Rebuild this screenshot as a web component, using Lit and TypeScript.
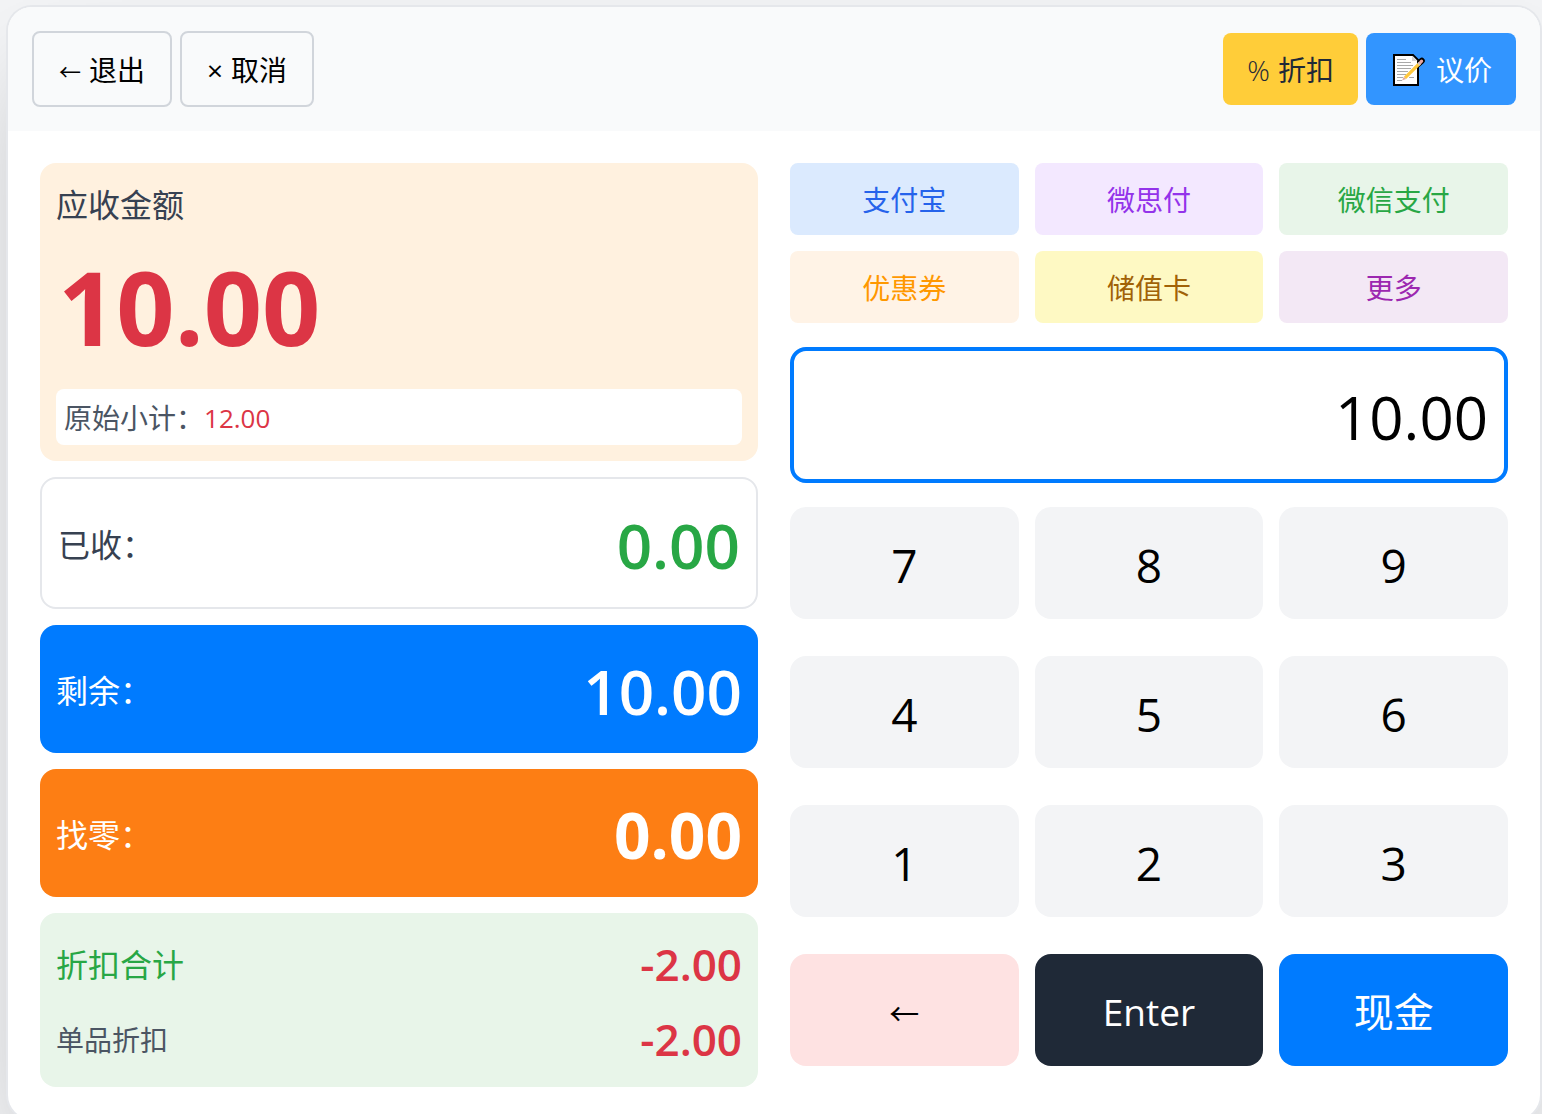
import { LitElement, html, css } from "lit";
import { customElement, state } from "lit/decorators.js";
import { classMap } from "lit/directives/class-map.js";

interface Method {
  label: string;
  tone: string;
}

const METHODS: Method[] = [
  { label: "支付宝", tone: "blue" },
  { label: "微思付", tone: "violet" },
  { label: "微信支付", tone: "green" },
  { label: "优惠券", tone: "orange" },
  { label: "储值卡", tone: "yellow" },
  { label: "更多", tone: "purple" },
];

const DIGITS = ["7", "8", "9", "4", "5", "6", "1", "2", "3"];

const memoIcon = html`
  <svg class="memo" viewBox="-3 0 37 34" fill="none" aria-hidden="true">
    <path d="M1 2H20L25 7V32H1Z" fill="#fff" stroke="#000" stroke-width="2" />
    <path d="M23.500 12.500L28.800 7.700" stroke="#000" stroke-width="6" stroke-linecap="round" />
    <path d="M2 3H19.500L24 7.500V31H2Z" fill="#fff" />
    <path d="M19 3V8H24L19.500 3Z" fill="#d6d6d6" />
    <path
      d="M4 6.500H13M4 9.500H18M4 12.500H20M4 15.500H18M4 18.500H15M4 21.500H13M4 24.500H10M16 24.500H21M4 27.500H9"
      stroke="#a9a9a9"
      stroke-width="1"
    />
    <path d="M12 24.800L26.500 10.500" stroke="#ffc83d" stroke-width="3.200" />
    <path d="M9 27.500L10.900 23.700L13.100 25.900Z" fill="#e0aca0" />
    <path d="M25.500 11.500L27 10" stroke="#c8c8c8" stroke-width="3.200" />
    <path d="M27.500 9.300L28.600 8.200" stroke="#e9a6a1" stroke-width="3.200" stroke-linecap="round" />
  </svg>
`;

@customElement("app-root")
export class AppRoot extends LitElement {
  static styles = css`
    :host {
      display: block;
      height: 100vh;
      overflow: hidden;
      box-sizing: border-box;
      padding: 7px 2px 0 8px;
      background: #f3f4f6;
      color: #000;
      font-family: "Open Sans", "Noto Sans CJK SC", sans-serif;
      font-size: 28px;
      line-height: 40px;
    }
    *,
    *::before,
    *::after {
      box-sizing: border-box;
    }
    button,
    input {
      margin: 0;
      font: inherit;
      color: inherit;
    }
    button {
      display: flex;
      align-items: center;
      justify-content: center;
      padding: 2px 24px 0;
      border: 0;
      cursor: pointer;
      white-space: nowrap;
    }
    .card {
      border-radius: 24px;
      background: #fff;
      overflow: hidden;
      box-shadow:
        0 0 0 2px #e5e7eb,
        0 50px 100px -24px rgba(0, 0, 0, 0.25);
    }
    .bar {
      display: flex;
      align-items: center;
      justify-content: space-between;
      padding: 24px;
      background: #f9fafb;
    }
    .group {
      display: flex;
      gap: 8px;
    }
    .tool {
      height: 72px;
      gap: 8px;
      border-radius: 8px;
    }
    .outlined {
      height: 76px;
      padding: 2px 25px 0;
      border: 2px solid #d1d5db;
      background: transparent;
    }
    .discount {
      background: #ffcd39;
      color: #1f2937;
    }
    .percent {
      font-weight: 300;
    }
    .bargain {
      background: #3295ff;
      color: #fff;
      gap: 9px;
    }
    .memo {
      width: 37px;
      height: 34px;
    }
    .body {
      display: grid;
      grid-template-columns: 1fr 1fr;
      gap: 32px;
      padding: 32px;
    }
    .summary {
      display: flex;
      flex-direction: column;
      gap: 16px;
    }
    .panel {
      border-radius: 16px;
      padding: 18px 16px 14px;
      font-size: 32px;
      line-height: 48px;
    }
    .due {
      padding-bottom: 16px;
      background: #fff1df;
      color: #374151;
    }
    .due-value {
      padding: 8px 2px 0;
      margin-bottom: 12px;
      color: #dc3545;
      font-size: 102px;
      line-height: 140px;
      font-weight: 700;
    }
    .original {
      display: flex;
      padding: 9px 8px 7px;
      border-radius: 8px;
      background: #fff;
      color: #4b5563;
      font-size: 28px;
      line-height: 40px;
    }
    .original-value {
      color: #dc3545;
      font-size: 26px;
    }
    .line {
      display: flex;
      align-items: center;
      justify-content: space-between;
    }
    .value {
      font-size: 62px;
      line-height: 96px;
      font-weight: 600;
    }
    .received {
      border: 2px solid #e5e7eb;
      color: #374151;
    }
    .received .value {
      color: #28a745;
    }
    .remaining {
      background: #007bff;
      color: #fff;
    }
    .change {
      background: #fd7e14;
      color: #fff;
    }
    .change .value {
      font-size: 64px;
      font-weight: 700;
    }
    .discounts {
      display: flex;
      flex-direction: column;
      gap: 8px;
      background: #e8f5e9;
      color: #28a745;
    }
    .detail {
      color: #4b5563;
      font-size: 28px;
    }
    .minus {
      color: #dc3545;
      font-size: 44px;
      line-height: 67px;
      font-weight: 600;
    }
    .entry {
      display: flex;
      flex-direction: column;
      gap: 24px;
    }
    .methods,
    .keys {
      display: grid;
      grid-template-columns: repeat(3, 1fr);
      gap: 16px;
    }
    .method {
      height: 72px;
      border-radius: 8px;
    }
    .blue {
      background: #dbeafe;
      color: #2563eb;
    }
    .violet {
      background: #f3e8ff;
      color: #9333ea;
    }
    .green {
      background: #e8f5e9;
      color: #28a745;
    }
    .orange {
      background: #fff3e6;
      color: #ff9800;
    }
    .yellow {
      background: #fef9c3;
      color: #a16207;
    }
    .purple {
      background: #f3e8f5;
      color: #9c27b0;
    }
    .amount {
      width: 100%;
      height: 136px;
      padding: 4px 16px 0;
      border: 4px solid #007bff;
      border-radius: 16px;
      outline: 0;
      background: #fff;
      color: #000;
      font-size: 60px;
      text-align: right;
    }
    .keys {
      flex: 1;
      grid-auto-rows: 1fr;
      align-items: start;
    }
    .key {
      height: 112px;
      padding-top: 4px;
      border-radius: 16px;
      background: #f3f4f6;
      font-size: 46px;
    }
    .back {
      background: #fee2e2;
      font-size: 30px;
    }
    .enter {
      background: #1f2937;
      color: #fff;
      font-size: 37px;
    }
    .cash {
      background: #007bff;
      color: #fff;
      font-size: 40px;
    }
    .arrow {
      font-family: "Noto Sans CJK SC", sans-serif;
    }
    .tool .arrow {
      font-size: 22px;
    }
  `;

  @state() private amount = "10.00";

  private press(digit: string) {
    this.amount += digit;
  }

  private erase() {
    this.amount = this.amount.slice(0, -1);
  }

  private edit(event: Event) {
    this.amount = (event.target as HTMLInputElement).value;
  }

  render() {
    return html`
      <main class="card">
        <header class="bar">
          <div class="group">
            <button class="tool outlined"><span class="arrow">←</span><span>退出</span></button>
            <button class="tool outlined"><span>×</span><span>取消</span></button>
          </div>
          <div class="group">
            <button class="tool discount"><span class="percent">%</span><span>折扣</span></button>
            <button class="tool bargain">${memoIcon}<span>议价</span></button>
          </div>
        </header>
        <div class="body">
          <section class="summary">
            <div class="panel due">
              <div>应收金额</div>
              <div class="due-value">10.00</div>
              <div class="original">
                <span>原始小计：</span><span class="original-value">12.00</span>
              </div>
            </div>
            <div class="panel line received"><span>已收：</span><span class="value">0.00</span></div>
            <div class="panel line remaining"><span>剩余：</span><span class="value">10.00</span></div>
            <div class="panel line change"><span>找零：</span><span class="value">0.00</span></div>
            <div class="panel discounts">
              <div class="line"><span>折扣合计</span><span class="minus">-2.00</span></div>
              <div class="line"><span class="detail">单品折扣</span><span class="minus">-2.00</span></div>
            </div>
          </section>
          <section class="entry">
            <div class="methods">
              ${METHODS.map(
                (m) => html`<button class=${classMap({ method: true, [m.tone]: true })}>${m.label}</button>`
              )}
            </div>
            <input
              class="amount"
              type="text"
              inputmode="decimal"
              aria-label="金额"
              .value=${this.amount}
              @input=${this.edit}
            />
            <div class="keys">
              ${DIGITS.map((d) => html`<button class="key" @click=${() => this.press(d)}>${d}</button>`)}
              <button class="key back arrow" @click=${this.erase}>←</button>
              <button class="key enter">Enter</button>
              <button class="key cash">现金</button>
            </div>
          </section>
        </div>
      </main>
    `;
  }
}
